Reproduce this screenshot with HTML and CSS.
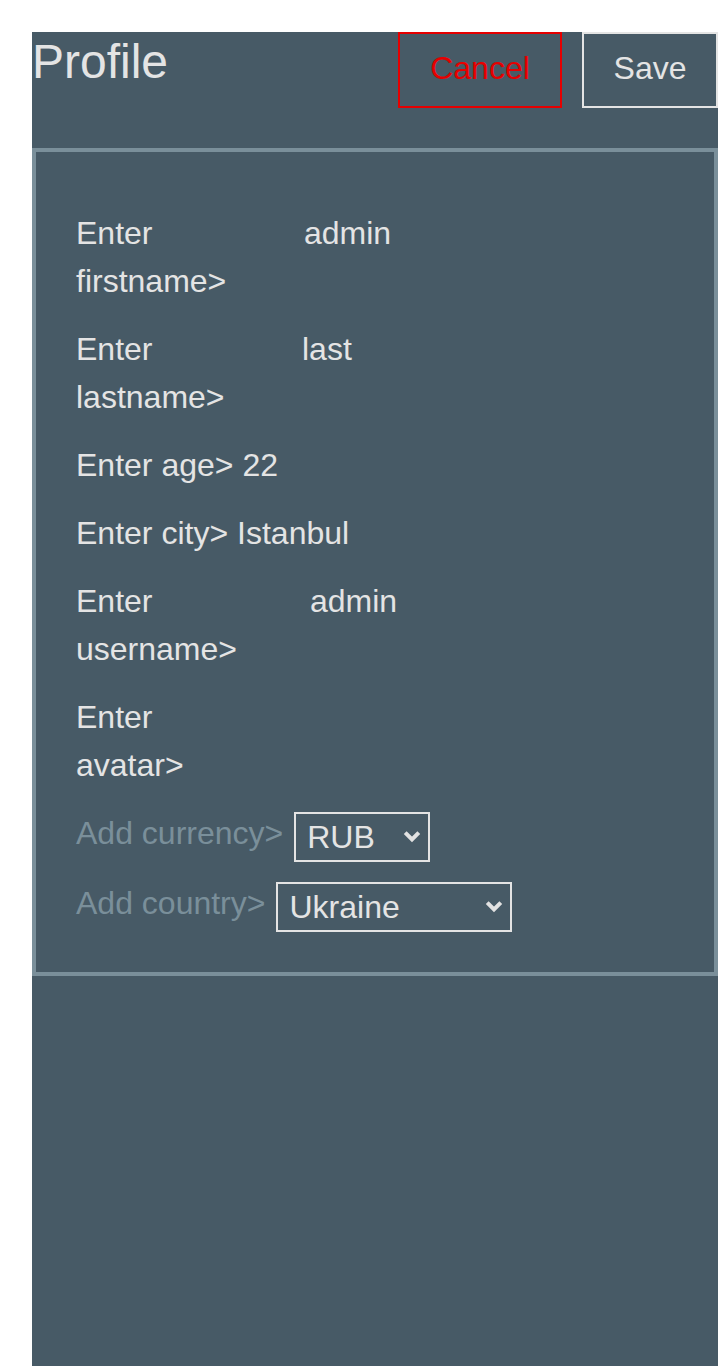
FILE: index.html
```html
<!DOCTYPE html>
<html lang="en">
<head>
<meta charset="utf-8">
<title>Profile</title>
<link rel="stylesheet" href="styles.css">
</head>
<body>
<div class="page">
  <div class="header">
    <h1 class="title">Profile</h1>
    <button class="btn btn-cancel">Cancel</button>
    <button class="btn btn-save">Save</button>
  </div>
  <form class="form">
    <div class="field">
      <span class="label w-first">Enter firstname&gt;</span>
      <span class="value">admin</span>
    </div>
    <div class="field">
      <span class="label w-last">Enter lastname&gt;</span>
      <span class="value">last</span>
    </div>
    <div class="field">
      <span class="label">Enter age&gt;</span>
      <span class="value">22</span>
    </div>
    <div class="field">
      <span class="label">Enter city&gt;</span>
      <span class="value">Istanbul</span>
    </div>
    <div class="field">
      <span class="label w-user">Enter username&gt;</span>
      <span class="value">admin</span>
    </div>
    <div class="field">
      <span class="label w-avatar">Enter avatar&gt;</span>
    </div>
    <div class="field field-select">
      <span class="label muted">Add currency&gt;</span>
      <span class="select-wrap">
        <select class="select sel-currency">
          <option>RUB</option>
          <option>USD</option>
          <option>EUR</option>
        </select>
        <svg class="chevron" width="18" height="13" viewBox="0 0 18 13" aria-hidden="true"><path d="M2.2 2.6 L9 9.4 L15.8 2.6" fill="none" stroke="#e2e2e2" stroke-width="4"/></svg>
      </span>
    </div>
    <div class="field field-select">
      <span class="label muted">Add country&gt;</span>
      <span class="select-wrap">
        <select class="select sel-country">
          <option>Ukraine</option>
          <option>Russia</option>
          <option>Turkey</option>
        </select>
        <svg class="chevron" width="18" height="13" viewBox="0 0 18 13" aria-hidden="true"><path d="M2.2 2.6 L9 9.4 L15.8 2.6" fill="none" stroke="#e2e2e2" stroke-width="4"/></svg>
      </span>
    </div>
  </form>
</div>
</body>
</html>
```
FILE: styles.css
```css
html, body {
  margin: 0;
  padding: 0;
  background: #ffffff;
}

.page {
  margin: 32px 0 0 32px;
  min-height: calc(100vh - 32px);
  background: #475a66;
  color: #e4e4e4;
  font-family: "Liberation Sans", Arial, sans-serif;
  font-size: 32px;
}

.header {
  display: flex;
  align-items: flex-start;
  gap: 20px;
}

.title {
  flex: 1;
  margin: 2px 0 0 0;
  font-size: 48px;
  font-weight: normal;
  line-height: 56px;
  color: #e4e4e4;
}

.btn {
  height: 76px;
  box-sizing: border-box;
  padding: 0 0 4px 0;
  background: transparent;
  font-family: "Liberation Sans", Arial, sans-serif;
  font-size: 32px;
  text-align: center;
}

.btn-cancel {
  width: 164px;
  border: 2px solid #e60000;
  color: #e60000;
}

.btn-save {
  width: 136px;
  border: 2px solid #e4e4e4;
  color: #e4e4e4;
}

.form {
  margin-top: 40px;
  border: 4px solid #7a8f9a;
  padding: 57px 40px 43px 40px;
  display: flex;
  flex-direction: column;
  gap: 20px;
}

.field {
  display: flex;
  align-items: flex-start;
  gap: 9px;
  line-height: 48px;
}

.label {
  flex-shrink: 0;
}

.w-first { width: 219px; }
.w-last { width: 217px; }
.w-user { width: 225px; }
.w-avatar { width: 150px; }

.muted {
  color: #7a8f9a;
}

.field-select {
  height: 50px;
  gap: 11px;
}

.select-wrap {
  position: relative;
  display: block;
  margin-top: 3px;
  height: 50px;
}

.select {
  display: block;
  -webkit-appearance: none;
  appearance: none;
  height: 50px;
  box-sizing: border-box;
  border: 2px solid #e4e4e4;
  border-radius: 0;
  background: transparent;
  color: #e4e4e4;
  font-family: "Liberation Sans", Arial, sans-serif;
  font-size: 32px;
  line-height: 46px;
  padding: 0 30px 0 11px;
  margin: 0;
}

.select option {
  color: #000;
  background: #fff;
}

.chevron {
  position: absolute;
  right: 9px;
  top: 18px;
  pointer-events: none;
}

.sel-currency { width: 136px; }
.sel-country { width: 236px; }
```
